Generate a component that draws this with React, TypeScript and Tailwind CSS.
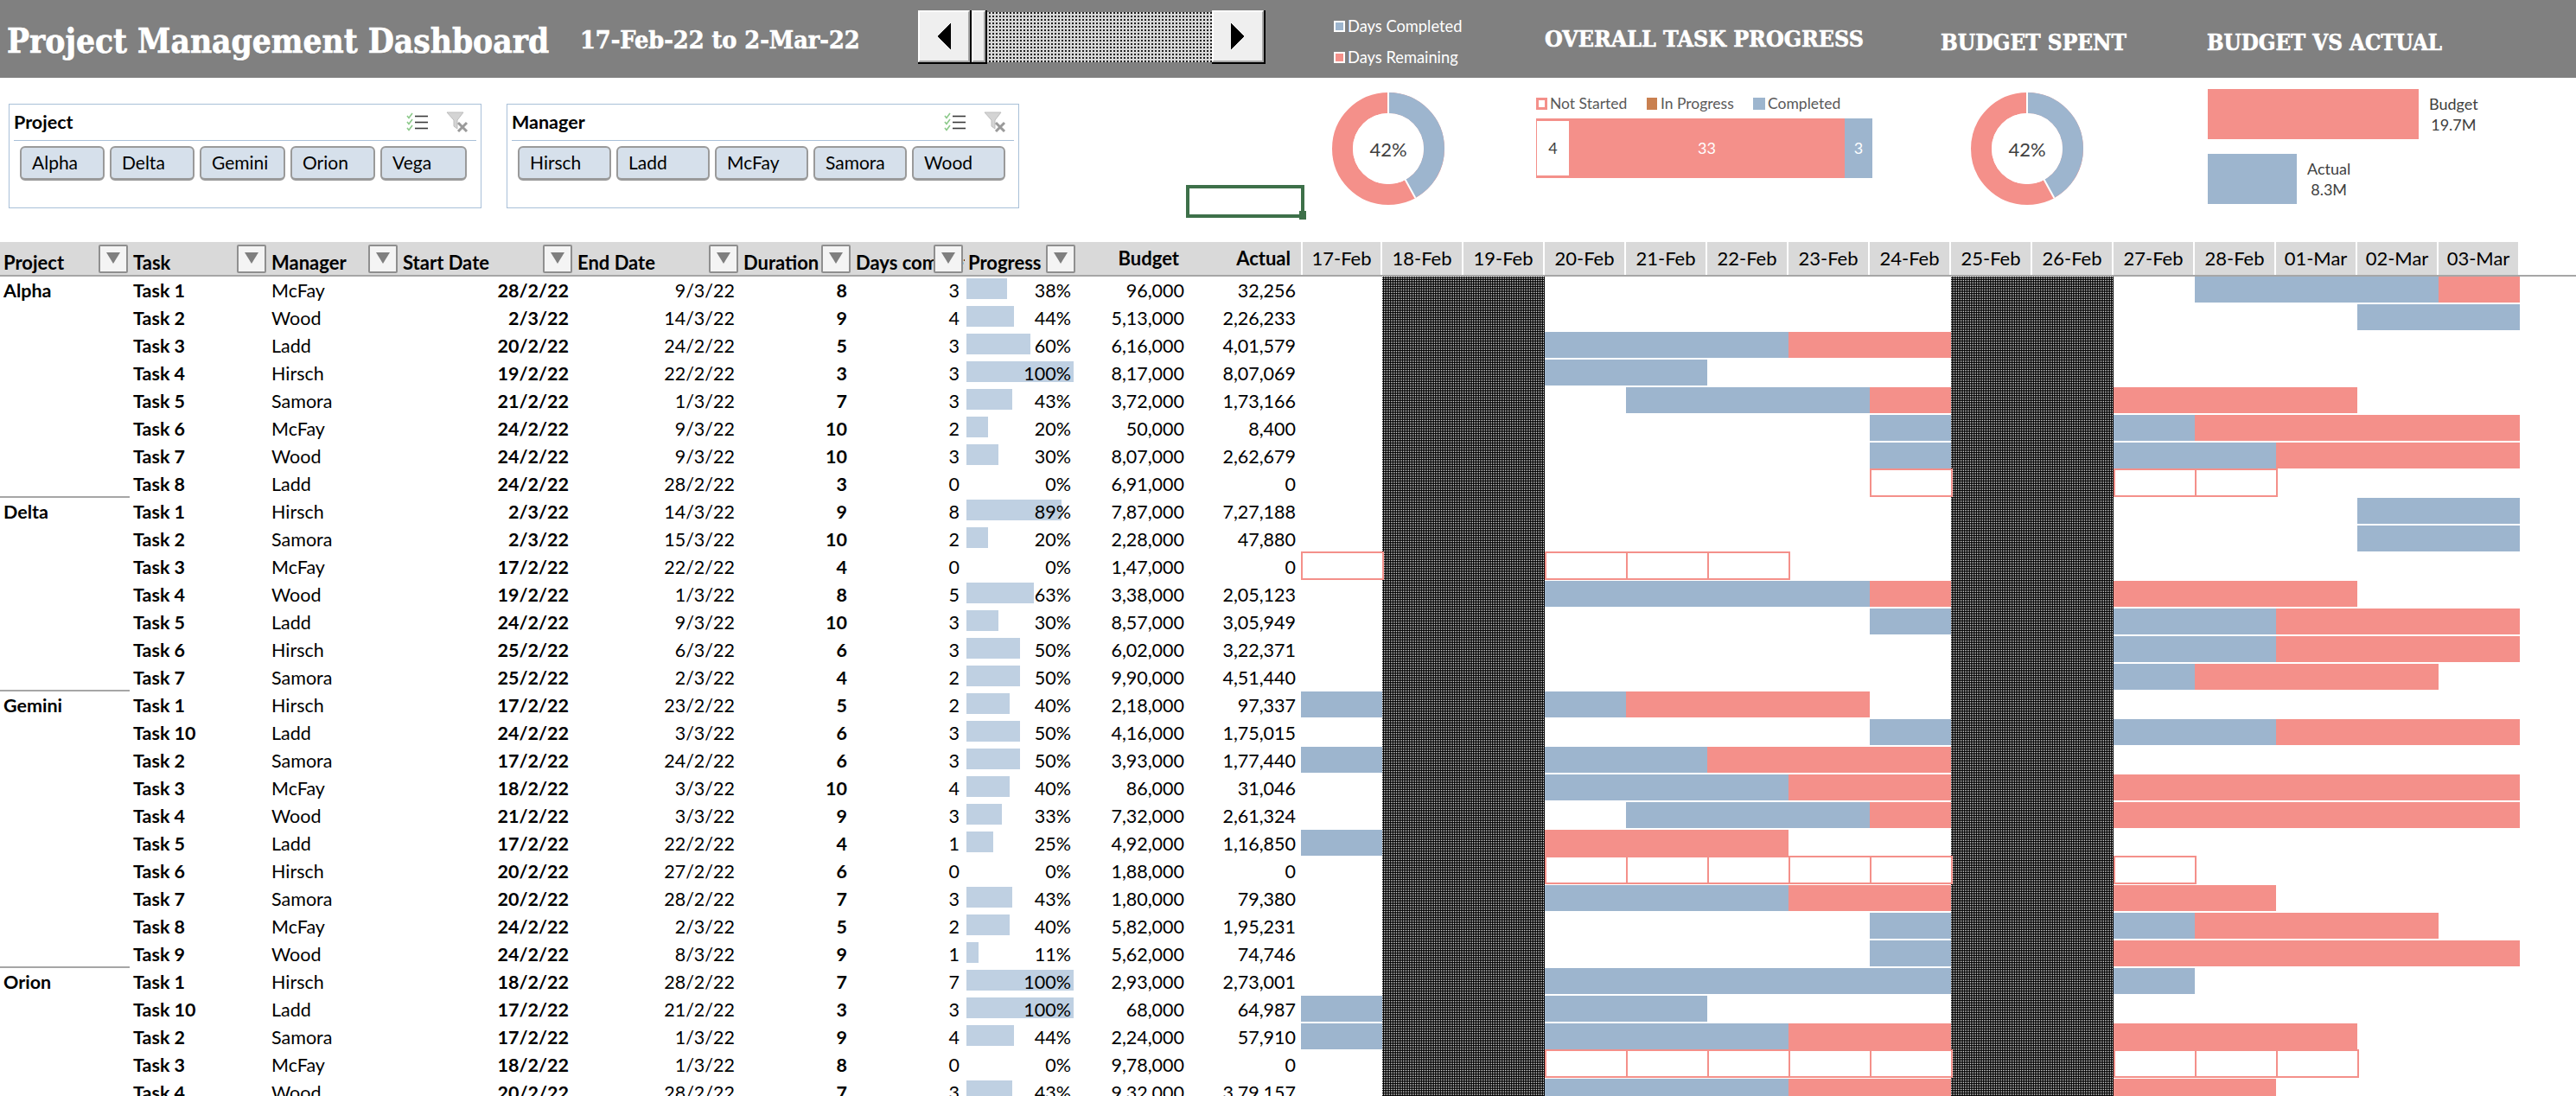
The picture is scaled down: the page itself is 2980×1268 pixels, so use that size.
import React from "react";

const rows: [string, string, string, string, string, number, number, number, string, string, string][] = [
  ["Alpha","Task 1","McFay","28/2/22","9/3/22",8,3,38,"96,000","32,256","...........bbbr"],
  ["","Task 2","Wood","2/3/22","14/3/22",9,4,44,"5,13,000","2,26,233",".............bb"],
  ["","Task 3","Ladd","20/2/22","24/2/22",5,3,60,"6,16,000","4,01,579","...bbbrr......."],
  ["","Task 4","Hirsch","19/2/22","22/2/22",3,3,100,"8,17,000","8,07,069","...bb.........."],
  ["","Task 5","Samora","21/2/22","1/3/22",7,3,43,"3,72,000","1,73,166","....bbbr..rrr.."],
  ["","Task 6","McFay","24/2/22","9/3/22",10,2,20,"50,000","8,400",".......b..brrrr"],
  ["","Task 7","Wood","24/2/22","9/3/22",10,3,30,"8,07,000","2,62,679",".......b..bbrrr"],
  ["","Task 8","Ladd","24/2/22","28/2/22",3,0,0,"6,91,000","0",".......o..oo..."],
  ["Delta","Task 1","Hirsch","2/3/22","14/3/22",9,8,89,"7,87,000","7,27,188",".............bb"],
  ["","Task 2","Samora","2/3/22","15/3/22",10,2,20,"2,28,000","47,880",".............bb"],
  ["","Task 3","McFay","17/2/22","22/2/22",4,0,0,"1,47,000","0","o..ooo........."],
  ["","Task 4","Wood","19/2/22","1/3/22",8,5,63,"3,38,000","2,05,123","...bbbbr..rrr.."],
  ["","Task 5","Ladd","24/2/22","9/3/22",10,3,30,"8,57,000","3,05,949",".......b..bbrrr"],
  ["","Task 6","Hirsch","25/2/22","6/3/22",6,3,50,"6,02,000","3,22,371","..........bbrrr"],
  ["","Task 7","Samora","25/2/22","2/3/22",4,2,50,"9,90,000","4,51,440","..........brrr."],
  ["Gemini","Task 1","Hirsch","17/2/22","23/2/22",5,2,40,"2,18,000","97,337","b..brrr........"],
  ["","Task 10","Ladd","24/2/22","3/3/22",6,3,50,"4,16,000","1,75,015",".......b..bbrrr"],
  ["","Task 2","Samora","17/2/22","24/2/22",6,3,50,"3,93,000","1,77,440","b..bbrrr......."],
  ["","Task 3","McFay","18/2/22","3/3/22",10,4,40,"86,000","31,046","...bbbrr..rrrrr"],
  ["","Task 4","Wood","21/2/22","3/3/22",9,3,33,"7,32,000","2,61,324","....bbbr..rrrrr"],
  ["","Task 5","Ladd","17/2/22","22/2/22",4,1,25,"4,92,000","1,16,850","b..rrr........."],
  ["","Task 6","Hirsch","20/2/22","27/2/22",6,0,0,"1,88,000","0","...ooooo..o...."],
  ["","Task 7","Samora","20/2/22","28/2/22",7,3,43,"1,80,000","79,380","...bbbrr..rr..."],
  ["","Task 8","McFay","24/2/22","2/3/22",5,2,40,"5,82,000","1,95,231",".......b..brrr."],
  ["","Task 9","Wood","24/2/22","8/3/22",9,1,11,"5,62,000","74,746",".......b..rrrrr"],
  ["Orion","Task 1","Hirsch","18/2/22","28/2/22",7,7,100,"2,93,000","2,73,001","...bbbbb..b...."],
  ["","Task 10","Ladd","17/2/22","21/2/22",3,3,100,"68,000","64,987","b..bb.........."],
  ["","Task 2","Samora","17/2/22","1/3/22",9,4,44,"2,24,000","57,910","b..bbbrr..rrr.."],
  ["","Task 3","McFay","18/2/22","1/3/22",8,0,0,"9,78,000","0","...ooooo..ooo.."],
  ["","Task 4","Wood","20/2/22","28/2/22",7,3,43,"9,32,000","3,79,157","...bbbrr..rr..."],
];

const days = ["17-Feb","18-Feb","19-Feb","20-Feb","21-Feb","22-Feb","23-Feb","24-Feb","25-Feb","26-Feb","27-Feb","28-Feb","01-Mar","02-Mar","03-Mar"];

const tableCols = "grid grid-cols-[150px_160px_152px_202px_192px_130px_130px_130px_130px_129px_repeat(15,94px)]";
const dither = "[background:repeating-conic-gradient(#000_0_75%,#fff_0_100%)_0_0/2px_2px]";
const slab = "font-['DejaVu_Serif',serif] font-bold text-white [font-stretch:condensed] [-webkit-text-stroke:0.6px_white]";

function FilterBtn() {
  return (
    <div className="absolute right-[2px] top-[3px] flex h-[33px] w-[34px] items-start justify-center rounded-[2px] border-2 border-[#8f8f8f] bg-[#f4f4f4] pt-[7px]">
      <svg width="16" height="13" viewBox="0 0 16 13"><polygon points="0,0 16,0 8,13" fill="#7f7f7f" /></svg>
    </div>
  );
}

function HeadCell({ label }: { label: string }) {
  return (
    <div className="relative h-[38px] overflow-hidden whitespace-nowrap pl-1 pt-[8px] text-[22px] font-bold leading-[32px] text-black">
      {label}
      <FilterBtn />
    </div>
  );
}

function Gantt({ code }: { code: string }) {
  return (
    <>
      {code.split("").map((c, i) => {
        const dark = i === 1 || i === 2 || i === 8 || i === 9;
        return (
          <div key={i} className={dark ? `h-8 ${dither}` : "relative h-8"}>
            {c === "b" && <div className="h-[30px] w-full bg-[#9db5ce]" />}
            {c === "r" && <div className="h-[30px] w-full bg-[#f4908a]" />}
            {c === "o" && <div className="absolute -top-[2px] left-0 z-10 h-[33px] w-[96px] border-2 border-[#f4908a]" />}
          </div>
        );
      })}
    </>
  );
}

function Row({ r, last }: { r: (typeof rows)[number]; last: boolean }) {
  const [project, task, manager, start, end, dur, done, pct, budget, actual, code] = r;
  return (
    <div className={`${tableCols} h-8 text-[21.5px] leading-8 text-black`}>
      <div className={`h-8 pl-1 font-bold ${last ? "border-b-2 border-[#a6a6a6]" : ""}`}>{project}</div>
      <div className="pl-1 font-bold">{task}</div>
      <div className="pl-1">{manager}</div>
      <div className="pr-1.5 text-right font-bold">{start}</div>
      <div className="pr-1.5 text-right">{end}</div>
      <div className="pr-1.5 text-right font-bold">{dur}</div>
      <div className="pr-1.5 text-right">{done}</div>
      <div className="relative pr-[7px] text-right">
        <div className="absolute left-[2px] top-[2px] h-6 bg-[#bfd0e2]" style={{ width: `${pct * 1.24}px` }} />
        <span className="relative">{pct}%</span>
      </div>
      <div className="pr-1.5 text-right">{budget}</div>
      <div className="pr-1.5 text-right">{actual}</div>
      <Gantt code={code} />
    </div>
  );
}

function ChecklistIcon() {
  return (
    <svg width="26" height="22" viewBox="0 0 26 22" fill="none">
      <g stroke="#8cc98a" strokeWidth="1.6">
        <path d="M1 4 L3 6.5 L7 1" />
        <path d="M1 11 L3 13.5 L7 8" />
        <path d="M1 18 L3 20.5 L7 15" />
      </g>
      <g stroke="#3a3a3a" strokeWidth="1.6">
        <path d="M10 4.5 H25" />
        <path d="M10 11.5 H25" />
        <path d="M10 18.5 H25" />
      </g>
    </svg>
  );
}

function ClearFilterIcon() {
  return (
    <svg width="26" height="24" viewBox="0 0 26 24" fill="none">
      <path d="M1 1 H20 L13 10 V20 L9 17 V10 Z" fill="#d4d4d4" stroke="#bdbdbd" />
      <path d="M14 13 L24 23 M24 13 L14 23" stroke="#9a9a9a" strokeWidth="3" />
    </svg>
  );
}

function Slicer({ title, items, className, widths }: { title: string; items: string[]; className: string; widths: number[] }) {
  return (
    <div className={`h-[121px] shrink-0 border-[1.5px] border-[#a9c0d8] bg-white px-[5px] ${className}`}>
      <div className="flex h-[41.5px] items-center justify-between border-b-[1.5px] border-[#a9c0d8] text-[21.5px] font-bold text-black">
        <span>{title}</span>
        <div className="flex items-center gap-[20px] pr-[9px]">
          <ChecklistIcon />
          <ClearFilterIcon />
        </div>
      </div>
      <div className="mt-[6px] flex gap-[6px] pl-[7px]">
        {items.map((t, i) => (
          <div key={t} className="flex h-10 items-center rounded-[6px] border-2 border-b-[3px] border-[#9a9a9a] bg-[#d6e0eb] pl-[12px] text-[21px] text-black" style={{ width: widths[i] }}>
            {t}
          </div>
        ))}
      </div>
    </div>
  );
}

function Donut({ className }: { className: string }) {
  const r = 53;
  const c = 2 * Math.PI * r;
  const a = 0.42 * 2 * Math.PI;
  return (
    <div className={`relative h-[130px] w-[130px] shrink-0 ${className}`}>
      <svg width="130" height="130" viewBox="0 0 130 130" className="-rotate-90">
        <circle cx="65" cy="65" r={r} fill="none" stroke="#f4908a" strokeWidth="24" />
        <circle cx="65" cy="65" r={r} fill="none" stroke="#9db5ce" strokeWidth="24" strokeDasharray={`${c * 0.42} ${c}`} />
        <path d="M65 65 H130" stroke="#fff" strokeWidth="2" />
        <line x1="65" y1="65" x2={65 + 65 * Math.cos(a)} y2={65 + 65 * Math.sin(a)} stroke="#fff" strokeWidth="2" />
        <circle cx="65" cy="65" r="41" fill="#fff" />
      </svg>
      <div className="absolute inset-0 flex items-center justify-center text-[22px] text-[#404040]">42%</div>
    </div>
  );
}

function ScrollCap({ children, className }: { children?: React.ReactNode; className: string }) {
  return (
    <div className={`h-[62px] border-b-2 border-r-2 border-black ${className}`}>
      <div className="flex h-full w-full items-center justify-center border-2 border-b-[#a6a6a6] border-l-white border-r-[#a6a6a6] border-t-white bg-[#efefef]">
        {children}
      </div>
    </div>
  );
}

export default function App() {
  return (
    <div className="h-[1268px] w-[2980px] overflow-hidden bg-white font-['Lato',sans-serif]">
      <header className="flex h-[90px] items-start bg-[#808080]">
        <div className={`w-[671px] shrink-0 whitespace-nowrap pl-2 pt-[25px] text-[38.5px] leading-[46px] ${slab}`}>Project Management Dashboard</div>
        <div className={`w-[391px] shrink-0 whitespace-nowrap pt-[28px] text-[28.5px] leading-[36px] ${slab}`}>17-Feb-22 to 2-Mar-22</div>
        <div className="mt-3 flex w-[402px] shrink-0">
          <ScrollCap className="w-[62px]">
            <svg width="16" height="30" viewBox="0 0 16 30" shapeRendering="crispEdges"><polygon points="16,0 16,30 0,15" fill="#000" /></svg>
          </ScrollCap>
          <ScrollCap className="w-[18px]" />
          <div className="my-[2px] h-[58px] w-[260px] [background:repeating-conic-gradient(#222_0_25%,#d8d8d8_0_100%)_0_0/4px_4px]" />
          <ScrollCap className="w-[62px]">
            <svg width="16" height="30" viewBox="0 0 16 30" shapeRendering="crispEdges"><polygon points="0,0 16,15 0,30" fill="#000" /></svg>
          </ScrollCap>
        </div>
        <div className="ml-[79px] flex h-[90px] w-[244px] shrink-0 flex-col gap-[18px] pt-[21px] text-[18.3px] leading-[18px] text-white">
          <div className="flex items-center gap-[3px]"><span className="h-[13px] w-[13px] border-2 border-white bg-[#9db5ce]" />Days Completed</div>
          <div className="flex items-center gap-[3px]"><span className="h-[13px] w-[13px] border-2 border-white bg-[#f4908a]" />Days Remaining</div>
        </div>
        <div className={`w-[458px] shrink-0 whitespace-nowrap pt-[28px] text-[26.5px] leading-[34px] ${slab}`}>OVERALL TASK PROGRESS</div>
        <div className={`w-[308px] shrink-0 whitespace-nowrap pt-[32px] text-[26px] leading-[34px] ${slab}`}>BUDGET SPENT</div>
        <div className={`whitespace-nowrap pt-[32px] text-[25.7px] leading-[34px] ${slab}`}>BUDGET VS ACTUAL</div>
      </header>

      <section className="flex h-[190px] items-start">
        <Slicer title="Project" className="ml-[10px] mt-[30px] w-[547px]" items={["Alpha","Delta","Gemini","Orion","Vega"]} widths={[98,98,99,98,100]} />
        <Slicer title="Manager" className="ml-[29px] mt-[30px] w-[593px]" items={["Hirsch","Ladd","McFay","Samora","Wood"]} widths={[108,108,108,108,108]} />
        <div className="relative ml-[193px] mt-[124px] h-[38px] w-[137px] shrink-0 border-[4px] border-[#3d7049]">
          <div className="absolute -bottom-[6px] -right-[6px] h-[10px] w-[8px] bg-[#3d7049]" />
        </div>
        <Donut className="ml-[32px] mt-[17px]" />
        <div className="ml-[106px] mt-[21px] w-[389px] shrink-0">
          <div className="flex h-[18px] items-center text-[17.5px] leading-[18px] text-[#595959]">
            <span className="mr-[3px] h-[14px] w-[13px] border-[3px] border-[#f4908a] bg-white" />
            <span className="w-[112px]">Not Started</span>
            <span className="mr-[4px] h-[14px] w-[12px] bg-[#c98050]" />
            <span className="w-[107px]">In Progress</span>
            <span className="mr-[3px] h-[14px] w-[14px] bg-[#9db5ce]" />
            <span>Completed</span>
          </div>
          <div className="mt-[8px] flex h-[69px] text-[18px] leading-[69px]">
            <div className="w-[38px] border-y-[3px] border-l border-[#f4908a] bg-white text-center leading-[62px] text-[#404040]">4</div>
            <div className="w-[319px] bg-[#f4908a] text-center text-white">33</div>
            <div className="w-[32px] bg-[#9db5ce] text-center text-white">3</div>
          </div>
        </div>
        <Donut className="ml-[114px] mt-[17px]" />
        <div className="ml-[144px] mt-[13px] flex shrink-0 flex-col gap-[17px] text-[18px] leading-6 text-[#404040]">
          <div className="flex items-center gap-3">
            <div className="h-[58px] w-[244px] bg-[#f4908a]" />
            <div className="text-center">Budget<br />19.7M</div>
          </div>
          <div className="flex items-center gap-3">
            <div className="h-[58px] w-[103px] bg-[#9db5ce]" />
            <div className="text-center">Actual<br />8.3M</div>
          </div>
        </div>
      </section>

      <div className="border-b-2 border-[#a6a6a6]">
        <div className={`${tableCols} h-[38px]`}>
          {["Project","Task","Manager","Start Date","End Date","Duration","Days complete","Progress"].map((h) => (
            <div key={h} className="h-[38px] bg-[#d9d9d9]"><HeadCell label={h} /></div>
          ))}
          <div className="h-[38px] bg-[#d9d9d9] pr-3 text-right text-[22px] font-bold leading-[38px] text-black">Budget</div>
          <div className="h-[38px] bg-[#d9d9d9] pr-3 text-right text-[22px] font-bold leading-[38px] text-black">Actual</div>
          {days.map((d, i) => (
            <div key={d} className={`h-[38px] border-r-2 border-white bg-[#d9d9d9] text-center text-[22px] leading-[38px] text-black ${i === 0 ? "border-l-2" : ""}`}>{d}</div>
          ))}
        </div>
      </div>

      <div>
        {rows.map((r, i) => (
          <Row key={i} r={r} last={i + 1 < rows.length && rows[i + 1][0] !== ""} />
        ))}
      </div>
    </div>
  );
}
